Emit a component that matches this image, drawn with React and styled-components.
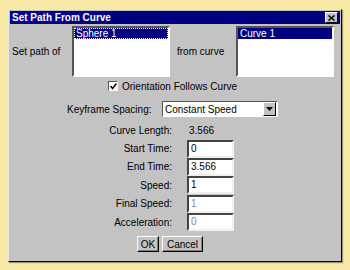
import React from "react";
import styled, { createGlobalStyle } from "styled-components";

const Global = createGlobalStyle`
  html, body { margin: 0; padding: 0; background: #f8e9a6; }
  body { font-family: "Liberation Sans", Arial, sans-serif; font-size: 10px; }
  #root { padding: 9px 0 0 8px; height: 270px; box-sizing: border-box; }
`;

const Dialog = styled.div`
  width: 334px;
  height: 253px;
  box-sizing: border-box;
  background: #c3c3c3;
  border: 1px solid;
  border-color: #e6e6e6 #000 #000 #e6e6e6;
  box-shadow: 1px 1px 1px rgba(0,0,0,0.35);
  padding: 1px;
  display: flex;
  flex-direction: column;
`;

const TitleBar = styled.div`
  height: 13px;
  background: #000080;
  color: #fff;
  font-weight: bold;
  font-size: 10px;
  line-height: 13px;
  padding-left: 2px;
  display: flex;
  align-items: center;
  justify-content: space-between;
`;

const CloseBtn = styled.div`
  width: 11px;
  height: 9px;
  margin-right: 2px;
  background: #c3c3c3;
  border: 1px solid;
  border-color: #fff #000 #000 #fff;
  display: flex;
  align-items: center;
  justify-content: center;
`;

const Row = styled.div`
  display: flex;
  align-items: center;
  padding-left: ${p => p.$pl || 0}px;
  margin-top: ${p => p.$mt || 0}px;
`;

const Label = styled.div`
  width: ${p => p.$w}px;
  padding-left: ${p => p.$pl || 0}px;
  flex: none;
  color: #000;
  white-space: nowrap;
`;

const ListBox = styled.div`
  width: 98px;
  height: 51px;
  box-sizing: border-box;
  background: #fff;
  border: 2px solid;
  border-color: #555 #fff #fff #555;
  outline: 1px solid #c3c3c3;
  flex: none;
`;

const ListItem = styled.div`
  height: 11px;
  line-height: 11px;
  padding-left: 2px;
  background: #000080;
  color: #fff;
  box-sizing: border-box;
  outline: ${p => (p.$focus ? "1px dotted #ffffff" : "none")};
  outline-offset: -1px;
`;

const CheckRow = styled.label`
  display: flex;
  align-items: center;
  gap: 4px;
  padding-left: 98px;
  margin-top: 4px;
  height: 10px;
`;

const CheckBox = styled.span`
  width: 8px;
  height: 8px;
  background: #fff;
  border: 1px solid;
  border-color: #555 #fff #fff #555;
  display: flex;
  align-items: center;
  justify-content: center;
`;

const Select = styled.div`
  width: 116px;
  height: 16px;
  box-sizing: border-box;
  background: #fff;
  border: 1px solid;
  border-color: #555 #fff #fff #555;
  display: flex;
  align-items: center;
  justify-content: space-between;
  padding-left: 2px;
`;

const DropBtn = styled.div`
  width: 11px;
  height: 12px;
  margin-right: 1px;
  background: #c3c3c3;
  border: 1px solid;
  border-color: #fff #000 #000 #fff;
  display: flex;
  align-items: center;
  justify-content: center;
`;

const Fields = styled.div`
  display: grid;
  grid-template-columns: 162px 47px;
  column-gap: 15px;
  grid-auto-rows: 18.4px;
  margin-top: 4px;
  align-items: center;
`;

const FieldLabel = styled.div`
  text-align: right;
  color: #000;
`;

const Value = styled.div`
  padding-left: 2px;
`;

const Input = styled.div`
  height: 18px;
  box-sizing: border-box;
  background: #fff;
  border: 2px solid;
  border-color: #444 #f0f0f0 #f0f0f0 #444;
  color: ${p => (p.$disabled ? "#8a8a8a" : "#000")};
  padding-left: 2px;
  line-height: 14px;
`;

const ButtonRow = styled.div`
  display: flex;
  gap: 3px;
  padding-left: 127px;
  margin-top: 5px;
`;

const Button = styled.div`
  height: 16px;
  box-sizing: border-box;
  padding: 0 4px;
  background: #c3c3c3;
  border: 1px solid;
  border-color: #fff #000 #000 #fff;
  box-shadow: inset -1px -1px 0 #808080;
  display: flex;
  align-items: center;
  justify-content: center;
  width: ${p => p.$w}px;
`;

export default function App() {
  const fields = [
    ["Start Time:", "0"],
    ["End Time:", "3.566"],
    ["Speed:", "1"],
    ["Final Speed:", "1", true],
    ["Acceleration:", "0", true],
  ];
  return (
    <>
      <Global />
      <Dialog>
        <TitleBar>
          <span>Set Path From Curve</span>
          <CloseBtn>
            <svg width="7" height="6" viewBox="0 0 7 6">
              <path d="M0.5 0.5 L6.5 5.5 M6.5 0.5 L0.5 5.5" stroke="#000" strokeWidth="1.5" />
            </svg>
          </CloseBtn>
        </TitleBar>
        <Row $pl={2} $mt={2}>
          <Label $w={60}>Set path of</Label>
          <ListBox>
            <ListItem $focus>Sphere 1</ListItem>
          </ListBox>
          <Label $w={59} $pl={7}>from curve</Label>
          <ListBox>
            <ListItem>Curve 1</ListItem>
          </ListBox>
        </Row>
        <CheckRow>
          <CheckBox>
            <svg width="7" height="7" viewBox="0 0 7 7">
              <path d="M0.5 3 L2.5 5.5 L6.5 0.5" stroke="#000" strokeWidth="1.5" fill="none" />
            </svg>
          </CheckBox>
          <span>Orientation Follows Curve</span>
        </CheckRow>
        <Row $pl={57} $mt={10}>
          <Label $w={95}>Keyframe Spacing:</Label>
          <Select>
            <span>Constant Speed</span>
            <DropBtn>
              <svg width="7" height="4" viewBox="0 0 7 4">
                <path d="M0 0 L7 0 L3.5 4 Z" fill="#000" />
              </svg>
            </DropBtn>
          </Select>
        </Row>
        <Fields>
          <FieldLabel>Curve Length:</FieldLabel>
          <Value>3.566</Value>
          {fields.map(([l, v, d]) => (
            <React.Fragment key={l}>
              <FieldLabel>{l}</FieldLabel>
              <Input $disabled={d}>{v}</Input>
            </React.Fragment>
          ))}
        </Fields>
        <ButtonRow>
          <Button $w={22}>OK</Button>
          <Button $w={41}>Cancel</Button>
        </ButtonRow>
      </Dialog>
    </>
  );
}
